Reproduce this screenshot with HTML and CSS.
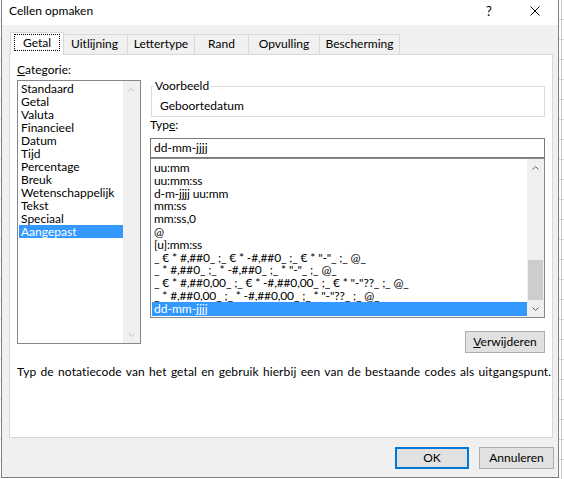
FILE: index.html
```html
<!DOCTYPE html>
<html lang="nl">
<head>
<meta charset="utf-8">
<title>Cellen opmaken</title>
<link rel="stylesheet" href="styles.css">
</head>
<body>
<div class="dialog">
  <div class="titlebar">
    <span class="title">Cellen opmaken</span>
    <span class="tb-btn help">?</span>
    <span class="tb-btn close">
      <svg width="10" height="10" viewBox="0 0 10 10"><path d="M0.5 0.5 L9.5 9.5 M9.5 0.5 L0.5 9.5" stroke="#000" stroke-width="1" fill="none"/></svg>
    </span>
  </div>

  <div class="tabs">
    <div class="tab active t-getal"><span class="focus">Getal</span></div>
    <div class="tab t-uit">Uitlijning</div>
    <div class="tab t-let">Lettertype</div>
    <div class="tab t-rand">Rand</div>
    <div class="tab t-opv">Opvulling</div>
    <div class="tab t-bes">Bescherming</div>
  </div>

  <div class="panel">
    <div class="cols">
      <div class="left">
        <div class="label"><u>C</u>ategorie:</div>
        <div class="listbox cat">
          <div class="items">
            <div class="item">Standaard</div>
            <div class="item">Getal</div>
            <div class="item">Valuta</div>
            <div class="item">Financieel</div>
            <div class="item">Datum</div>
            <div class="item">Tijd</div>
            <div class="item">Percentage</div>
            <div class="item">Breuk</div>
            <div class="item">Wetenschappelijk</div>
            <div class="item">Tekst</div>
            <div class="item">Speciaal</div>
            <div class="item selected">Aangepast</div>
          </div>
          <div class="vscroll disabled">
            <div class="sbtn"><svg width="7" height="4" viewBox="0 0 7 4"><path d="M0.5 3.5 L3.5 0.5 L6.5 3.5" fill="none" stroke="currentColor"/></svg></div>
            <div class="track"></div>
            <div class="sbtn"><svg width="7" height="4" viewBox="0 0 7 4"><path d="M0.5 0.5 L3.5 3.5 L6.5 0.5" fill="none" stroke="currentColor"/></svg></div>
          </div>
        </div>
      </div>

      <div class="right">
        <fieldset class="preview">
          <legend>Voorbeeld</legend>
          <div class="sample">Geboortedatum</div>
        </fieldset>
        <div class="label type-label">Typ<u>e</u>:</div>
        <div class="input">dd-mm-jjjj</div>
        <div class="listbox types">
          <div class="items">
            <div class="item">uu:mm</div>
            <div class="item">uu:mm:ss</div>
            <div class="item">d-m-jjjj uu:mm</div>
            <div class="item">mm:ss</div>
            <div class="item">mm:ss,0</div>
            <div class="item">@</div>
            <div class="item">[u]:mm:ss</div>
            <div class="item">_ € * #,##0_ ;_ € * -#,##0_ ;_ € * "-"_ ;_ @_</div>
            <div class="item">_ * #,##0_ ;_ * -#,##0_ ;_ * "-"_ ;_ @_</div>
            <div class="item">_ € * #,##0,00_ ;_ € * -#,##0,00_ ;_ € * "-"??_ ;_ @_</div>
            <div class="item">_ * #,##0,00_ ;_ * -#,##0,00_ ;_ * "-"??_ ;_ @_</div>
            <div class="item selected">dd-mm-jjjj</div>
          </div>
          <div class="vscroll">
            <div class="sbtn"><svg width="7" height="4" viewBox="0 0 7 4"><path d="M0.5 3.5 L3.5 0.5 L6.5 3.5" fill="none" stroke="currentColor"/></svg></div>
            <div class="track"><div class="thumb"></div></div>
            <div class="sbtn"><svg width="7" height="4" viewBox="0 0 7 4"><path d="M0.5 0.5 L3.5 3.5 L6.5 0.5" fill="none" stroke="currentColor"/></svg></div>
          </div>
        </div>
        <button class="btn delete"><u>V</u>erwijderen</button>
      </div>
    </div>
    <p class="desc">Typ de notatiecode van het getal en gebruik hierbij een van de bestaande codes als uitgangspunt.</p>
  </div>

  <div class="footer">
    <button class="btn ok">OK</button>
    <button class="btn cancel">Annuleren</button>
  </div>
</div>
</body>
</html>
```

FILE: styles.css
```css
html, body {
  margin: 0;
  padding: 0;
}

body {
  width: 564px;
  height: 479px;
  overflow: hidden;
  background-color: #ffffff;
  background-image:
    linear-gradient(to right, transparent 561px, #c8c8c8 561px, #c8c8c8 562px, transparent 562px),
    repeating-linear-gradient(to bottom, transparent 0, transparent 19px, #dadada 19px, #dadada 20px);
  font-family: "Segoe UI", Lato, "Noto Sans", sans-serif;
  font-size: 12px;
  color: #000;
}

.dialog {
  margin-left: 1px;
  width: 558px;
  height: 478px;
  box-sizing: border-box;
  border: 1px solid #7f7f7f;
  border-top: 0;
  background: #f0f0f0;
  display: flex;
  flex-direction: column;
}

/* title bar */
.titlebar {
  height: 25px;
  flex: none;
  background: #fff;
  display: flex;
  align-items: center;
}
.title {
  flex: 1;
  padding-left: 7px;
  padding-bottom: 3px;
  line-height: 16px;
}
.tb-btn {
  width: 46px;
  display: flex;
  justify-content: center;
  align-items: center;
  padding-bottom: 3px;
}
.help {
  font-size: 13px;
  line-height: 16px;
}

/* tabs */
.tabs {
  flex: none;
  display: flex;
  align-items: flex-end;
  height: 22px;
  margin: 7px 0 0 10px;
}
.tab {
  box-sizing: border-box;
  height: 20px;
  border: 1px solid #d9d9d9;
  border-bottom: 0;
  margin-right: -1px;
  display: flex;
  align-items: center;
  justify-content: center;
  line-height: 16px;
  padding-bottom: 1px;
  background: #f0f0f0;
}
.t-getal { width: 50px; }
.t-uit { width: 67px; }
.t-let { width: 68px; }
.t-rand { width: 55px; }
.t-opv { width: 72px; }
.t-bes { width: 81px; }

.tab.active {
  width: 54px;
  height: 23px;
  margin: 0 -3px -1px -2px;
  background: #fff;
  position: relative;
  z-index: 1;
  padding-bottom: 3px;
}
.focus {
  outline: 1px dotted #000;
  outline-offset: 0;
  padding: 0 8px;
  line-height: 15px;
}

/* panel */
.panel {
  flex: none;
  box-sizing: border-box;
  width: 544px;
  height: 384px;
  margin: 0 0 0 7px;
  border: 1px solid #d9d9d9;
  background: #fff;
  padding: 7px 0 0 7px;
}
.cols {
  display: flex;
  gap: 9px;
}
.left {
  width: 124px;
  flex: none;
}
.right {
  width: 395px;
  flex: none;
  padding-top: 17px;
  display: flex;
  flex-direction: column;
}
.label {
  line-height: 16px;
  height: 16px;
}

/* list boxes */
.listbox {
  box-sizing: border-box;
  border: 1px solid #828790;
  display: flex;
  background: #fff;
  overflow: hidden;
}
.listbox.cat {
  margin-top: 2px;
  height: 264px;
}
.listbox .items {
  flex: 1;
  min-width: 0;
  overflow: hidden;
  padding-left: 1px;
}
.cat .items {
  padding-top: 1px;
}
.cat .item {
  height: 13px;
  line-height: 13px;
  padding-left: 2px;
  white-space: nowrap;
}
.item.selected {
  background: #3399ff;
  color: #fff;
}

.vscroll {
  width: 17px;
  flex: none;
  background: #f0f0f0;
  display: flex;
  flex-direction: column;
  color: #606060;
}
.vscroll.disabled {
  color: #c0c0c0;
}
.sbtn {
  height: 17px;
  flex: none;
  display: flex;
  align-items: center;
  justify-content: center;
}
.sbtn svg {
  display: block;
}
.track {
  flex: 1;
  display: flex;
  flex-direction: column;
  justify-content: flex-end;
}
.thumb {
  height: 40px;
  margin: 0 1px;
  background: #cdcdcd;
}

/* preview group */
.preview {
  margin: 0 0 0 1px;
  padding: 0 0 2px 2px;
  border: 1px solid #dcdcdc;
  min-width: 0;
}
.preview legend {
  padding: 0 1px;
  line-height: 14px;
}
.sample {
  margin: 5px 0 0 6px;
  line-height: 16px;
}
.type-label {
  margin-top: 0;
}

.input {
  box-sizing: border-box;
  margin-top: 5px;
  height: 20px;
  border: 1px solid #7a7a7a;
  padding: 0 3px;
  line-height: 18px;
  white-space: nowrap;
}

.listbox.types {
  height: 160px;
}
.types .items {
  padding-top: 3px;
}
.types .item {
  height: 12.8px;
  line-height: 12.8px;
  padding-left: 2px;
  white-space: nowrap;
  letter-spacing: -0.15px;
}
.types .item.selected {
  height: 14px;
  line-height: 14px;
  margin-top: -1px;
  letter-spacing: 0;
}

/* buttons */
.btn {
  font-family: inherit;
  font-size: 12px;
  color: #000;
  background: #e1e1e1;
  border: 1px solid #adadad;
  box-sizing: border-box;
  height: 22px;
  padding: 0;
  margin: 0;
  line-height: 18px;
}
.delete {
  align-self: flex-end;
  width: 80px;
  margin-top: 13px;
}

.desc {
  margin: 11px 0 0 0;
  line-height: 16px;
  white-space: nowrap;
  word-spacing: 1.1px;
  letter-spacing: 0.1px;
}

.footer {
  flex: none;
  display: flex;
  justify-content: flex-end;
  gap: 10px;
  margin-top: 9px;
  padding-right: 4px;
}
.ok {
  width: 74px;
  border: 2px solid #0078d7;
}
.cancel {
  width: 75px;
}
```
